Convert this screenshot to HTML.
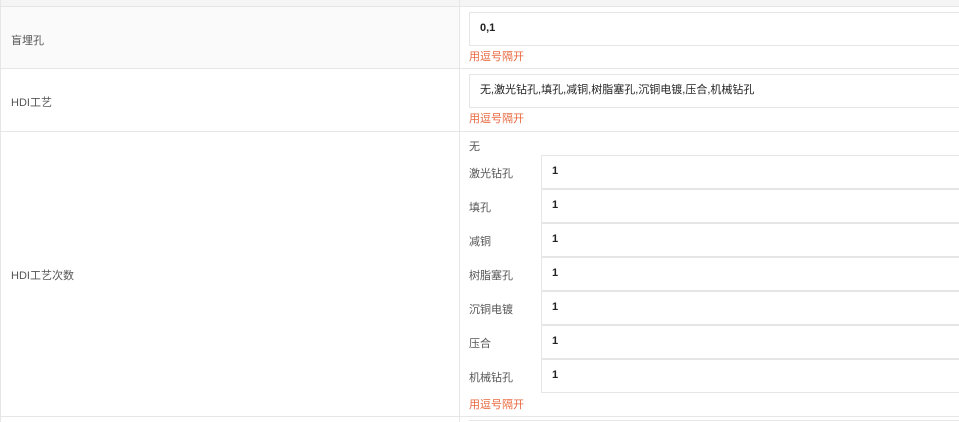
<!DOCTYPE html><html><head><meta charset="utf-8"><style>
body{margin:0;width:959px;height:422px;overflow:hidden;background:#fff;font-family:"Liberation Sans","Noto Sans CJK SC",sans-serif;font-size:11px;position:relative}
div{position:absolute;box-sizing:border-box}
.h{background:#e6e6e6;height:1px;left:0;width:959px}
.lab{left:11px;color:#555}
.in{border:1px solid #e6e6e6;background:#fff;color:#222;font-weight:bold;line-height:31px;height:34px}
.hint{left:469px;color:#e8683f}
.sl{left:469px;color:#555}
</style></head><body>
<div style="left:0;top:0;width:959px;height:6px;background:#f5f5f5"></div>
<div class="h" style="top:6px"></div>
<div style="left:0;top:7px;width:459px;height:61px;background:#fafafa"></div>
<div class="h" style="top:68px"></div>
<div class="h" style="top:131px"></div>
<div class="h" style="top:416px"></div>
<div style="left:459px;top:0;width:1px;height:422px;background:#e6e6e6"></div>
<div style="left:0;top:0;width:1px;height:422px;background:#e6e6e6"></div>
<div class="lab" style="top:32px">盲埋孔</div>
<div class="lab" style="top:94px">HDI工艺</div>
<div class="lab" style="top:267px">HDI工艺次数</div>
<div class="in" style="left:469px;top:12px;width:500px;padding-left:10px">0,1</div>
<div class="hint" style="top:48px">用逗号隔开</div>
<div class="in" style="left:469px;top:74px;width:500px;padding-left:10px;font-weight:normal">无,激光钻孔,填孔,减铜,树脂塞孔,沉铜电镀,压合,机械钻孔</div>
<div class="hint" style="top:110px">用逗号隔开</div>
<div class="sl" style="top:138px">无</div>
<div class="sl" style="top:165px">激光钻孔</div><div class="in" style="left:541px;top:155px;width:430px;padding-left:10px">1</div>
<div class="sl" style="top:199px">填孔</div><div class="in" style="left:541px;top:189px;width:430px;padding-left:10px">1</div>
<div class="sl" style="top:233px">减铜</div><div class="in" style="left:541px;top:223px;width:430px;padding-left:10px">1</div>
<div class="sl" style="top:267px">树脂塞孔</div><div class="in" style="left:541px;top:257px;width:430px;padding-left:10px">1</div>
<div class="sl" style="top:301px">沉铜电镀</div><div class="in" style="left:541px;top:291px;width:430px;padding-left:10px">1</div>
<div class="sl" style="top:335px">压合</div><div class="in" style="left:541px;top:325px;width:430px;padding-left:10px">1</div>
<div class="sl" style="top:369px">机械钻孔</div><div class="in" style="left:541px;top:359px;width:430px;padding-left:10px">1</div>
<div class="hint" style="top:396px">用逗号隔开</div>
<div style="left:469px;top:420px;width:500px;height:2px;border-top:1px solid #e6e6e6"></div>
</body></html>
